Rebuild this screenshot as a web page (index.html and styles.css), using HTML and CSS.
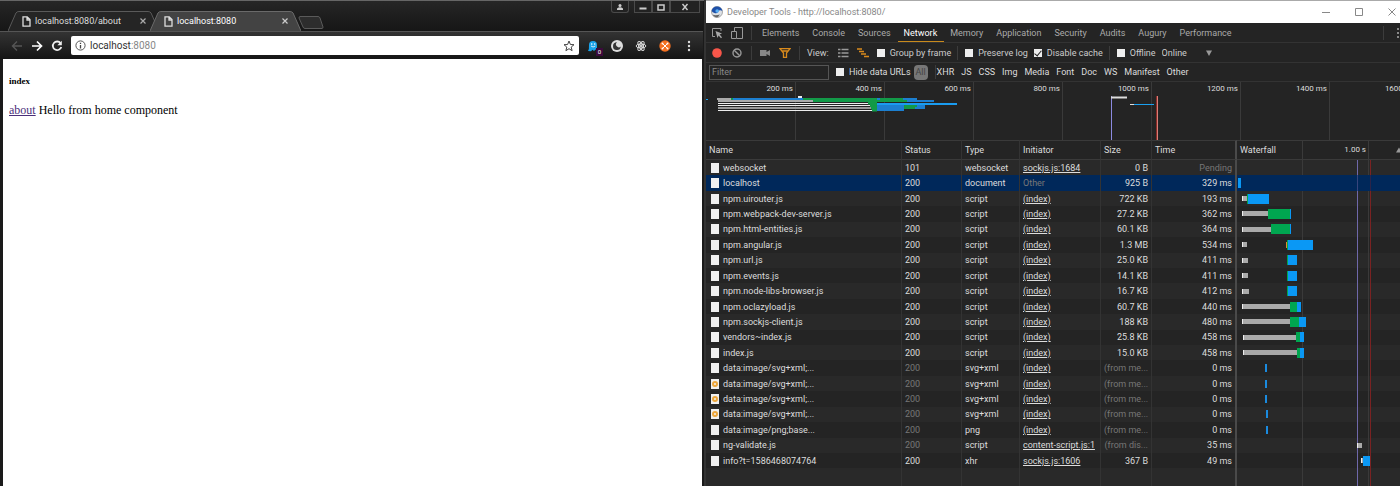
FILE: index.html
```html
<!DOCTYPE html>
<html lang="en">
<head>
  <meta charset="UTF-8">
  <title>localhost:8080</title>
  <link rel="stylesheet" href="styles.css">
</head>
<body>
<div class="browser">
  <div class="tabstrip">
    <div class="tab">
      <svg class="tab-shape" viewBox="0 0 152 20" preserveAspectRatio="none"><path d="M0 20L8 2Q9 .5 11 .5H141Q143 .5 144 2L152 20" fill="#252525" stroke="#5a5a5a"/></svg>
      <svg class="file" viewBox="0 0 9 11"><path d="M1 .8H5.2L8 3.6V10.2H1ZM5 1V4H8" fill="none" stroke="#ddd" stroke-width="1.3"/></svg>
      <span class="tab-title">localhost:8080/about</span>
      <button class="tab-close" aria-label="Close"><svg viewBox="0 0 6 6"><path d="M.5 .5L5.5 5.5M5.5 .5L.5 5.5" stroke="#aaa" stroke-width="1.2"/></svg></button>
    </div>
    <div class="tab active">
      <svg class="tab-shape" viewBox="0 0 152 20" preserveAspectRatio="none"><path d="M0 20L8 2Q9 .5 11 .5H141Q143 .5 144 2L152 20" fill="#434343" stroke="#6a6a6a"/></svg>
      <svg class="file" viewBox="0 0 9 11"><path d="M1 .8H5.2L8 3.6V10.2H1ZM5 1V4H8" fill="none" stroke="#ddd" stroke-width="1.3"/></svg>
      <span class="tab-title">localhost:8080</span>
      <button class="tab-close" aria-label="Close"><svg viewBox="0 0 6 6"><path d="M.5 .5L5.5 5.5M5.5 .5L.5 5.5" stroke="#ccc" stroke-width="1.2"/></svg></button>
    </div>
    <button class="new-tab" aria-label="New tab"><svg viewBox="0 0 26 13"><path d="M2 .5H20Q21.500 .5 22 2L25 11Q25 12.500 24 12.500H7Q5.500 12.500 5 11L1 2Q1 .5 2 .5Z" fill="#2d2d2d" stroke="#5a5a5a"/></svg></button>
    <div class="win-buttons">
      <button class="user" aria-label="User"><svg viewBox="0 0 8 8"><circle cx="4" cy="2.400" r="1.500" fill="#ccc"/><path d="M1 7V5.600Q2.500 4.300 4 4.300T7 5.600V7Z" fill="#ccc"/></svg></button>
      <button aria-label="Minimize"><svg viewBox="0 0 8 8"><path d="M.5 5.500H7.500" stroke="#ccc" stroke-width="2"/></svg></button>
      <button aria-label="Maximize"><svg viewBox="0 0 8 8"><path d="M1 2H7V7H1Z" fill="none" stroke="#ccc" stroke-width="1.500"/></svg></button>
      <button class="wide" aria-label="Close"><svg viewBox="0 0 8 8"><path d="M1.500 1L6.500 7M6.500 1L1.500 7" stroke="#ccc" stroke-width="1.400"/></svg></button>
    </div>
  </div>
  <div class="nav">
    <button aria-label="Back"><svg viewBox="0 0 12 12"><path d="M11 6H2M6 1.500L1.500 6L6 10.500" fill="none" stroke="#555" stroke-width="1.400"/></svg></button>
    <button aria-label="Forward"><svg viewBox="0 0 12 12"><path d="M1 6H10M6 1.500L10.500 6L6 10.500" fill="none" stroke="#fff" stroke-width="1.700"/></svg></button>
    <button aria-label="Reload"><svg viewBox="0 0 12 12"><path d="M9.600 3.200A4.300 4.300 0 1 0 10.300 7" fill="none" stroke="#eee" stroke-width="1.800"/><path d="M10.800 .8V5.300H6.300Z" fill="#eee"/></svg></button>
    <div class="omnibox">
      <svg class="info" viewBox="0 0 11 11"><circle cx="5.500" cy="5.500" r="4.600" fill="none" stroke="#555"/><path d="M5.500 2.700V4M5.500 5V8.500" stroke="#444" stroke-width="1.300"/></svg>
      <span class="url" role="textbox" aria-label="Address">localhost<span class="port">:8080</span></span>
      <svg class="star" viewBox="0 0 12 12"><path d="M6 1L7.400 4.500L11 4.700L8.200 7.100L9.100 10.700L6 8.700L2.900 10.700L3.800 7.100L1 4.700L4.600 4.500Z" fill="none" stroke="#444"/></svg>
    </div>
    <div class="extensions">
      <button class="ghost" aria-label="Ghostery"><svg viewBox="0 0 12 12"><path d="M2 5Q2 1 6 1T10 5V10.500L8.500 9.500L7 11L5.500 9.800L4 11.300L1 11Q2.300 9 2 5Z" fill="#1aa3ea"/><circle cx="4.700" cy="4" r=".8" fill="#fff"/><circle cx="7.700" cy="4" r=".8" fill="#fff"/><path d="M4 6Q6 8 8.300 6" fill="none" stroke="#fff" stroke-width=".8"/></svg><span class="badge">0</span></button>
      <button aria-label="Augury"><svg viewBox="0 0 12 12"><circle cx="6" cy="6" r="6" fill="#ddd"/><path d="M6 2.200A3.900 3.900 0 1 0 9.800 6.500A2.600 2.600 0 1 1 6 2.200Z" fill="#333"/></svg></button>
      <button aria-label="React"><svg viewBox="0 0 12 12"><g fill="none" stroke="#ddd"><ellipse cx="6" cy="6" rx="5" ry="2"/><ellipse cx="6" cy="6" rx="5" ry="2" transform="rotate(60 6 6)"/><ellipse cx="6" cy="6" rx="5" ry="2" transform="rotate(120 6 6)"/></g><circle cx="6" cy="6" r="1" fill="#fff"/></svg></button>
      <button aria-label="Extension"><svg viewBox="0 0 12 12"><circle cx="6" cy="6" r="5.700" fill="#f37021"/><path d="M3.500 3.500L8.500 8.500M8.500 3.500L3.500 8.500" stroke="#fff"/><g fill="#fff"><circle cx="3.500" cy="3.500" r="1"/><circle cx="8.500" cy="3.500" r="1"/><circle cx="3.500" cy="8.500" r="1"/><circle cx="8.500" cy="8.500" r="1"/></g></svg></button>
      <button aria-label="Menu"><svg viewBox="0 0 12 12"><g fill="#ddd"><circle cx="6" cy="2" r="1.200"/><circle cx="6" cy="6" r="1.200"/><circle cx="6" cy="10" r="1.200"/></g></svg></button>
    </div>
  </div>
  <div class="page">
    <h5>index</h5>
    <p><a href="#about">about</a> Hello from home component</p>
  </div>
</div>

<div class="devtools">
  <div class="titlebar">
    <svg class="logo" viewBox="0 0 12 12"><circle cx="6" cy="6" r="5.500" fill="#dde1e6" stroke="#777" stroke-width=".6"/><path d="M.6 5Q1.500 .5 6 .5T11.400 5Q10 4 8 4.500Q6.500 8 3.500 7Q1.500 6.500 .6 5Z" fill="#1e50a8"/><path d="M1.500 8.500Q4 10 9 8.500Q7.500 11.400 5 11.200Q2.500 10.800 1.500 8.500Z" fill="#666"/><circle cx="6.200" cy="5" r="1.800" fill="#5ab0f5"/></svg>
    <span class="title">Developer Tools - http://localhost:8080/</span>
    <button aria-label="Minimize"><svg viewBox="0 0 8 8"><path d="M0 4.500H8" stroke="#888"/></svg></button>
    <button aria-label="Maximize"><svg viewBox="0 0 8 8"><path d="M.5 .5H7.500V7.500H.5Z" fill="none" stroke="#888"/></svg></button>
    <button aria-label="Close"><svg viewBox="0 0 8 8"><path d="M.5 .5L7.500 7.500M7.500 .5L.5 7.500" stroke="#888"/></svg></button>
  </div>
  <div class="panels">
    <button class="tool" aria-label="Inspect"><svg viewBox="0 0 12 12"><path d="M4 9.500H1.500V1.500H10V4" fill="none" stroke="#999"/><path d="M4.500 4L11 6.500L8.600 7.600L11 10.300L10 11.200L7.600 8.600L6.500 11Z" fill="#aaa"/></svg></button>
    <button class="tool" aria-label="Device toolbar"><svg viewBox="0 0 12 12"><path d="M3.500 4V.5H11.500V11.500H6M.5 4.500H5.500V11.500H.5Z" fill="none" stroke="#999"/></svg></button>
    <span class="sep"></span>
    <nav>
      <a href="#elements">Elements</a>
      <a href="#console">Console</a>
      <a href="#sources">Sources</a>
      <a href="#network" class="current">Network</a>
      <a href="#memory">Memory</a>
      <a href="#application">Application</a>
      <a href="#security">Security</a>
      <a href="#audits">Audits</a>
      <a href="#augury">Augury</a>
      <a href="#performance">Performance</a>
    </nav>
    <span class="sep right"></span>
    <button class="more" aria-label="More"><svg viewBox="0 0 12 12"><g fill="#aaa"><circle cx="6" cy="2" r="1"/><circle cx="6" cy="6" r="1"/><circle cx="6" cy="10" r="1"/></g></svg></button>
  </div>
  <div class="actions">
    <button class="tool" aria-label="Record"><svg viewBox="0 0 12 12"><circle cx="6" cy="6" r="4.800" fill="#f8564a"/></svg></button>
    <button class="tool" aria-label="Clear"><svg viewBox="0 0 12 12"><circle cx="6" cy="6" r="4" fill="none" stroke="#999" stroke-width="1.400"/><path d="M3.200 3.200L8.800 8.800" stroke="#999" stroke-width="1.400"/></svg></button>
    <span class="sep"></span>
    <button class="tool" aria-label="Screenshots"><svg viewBox="0 0 12 12"><path d="M1 3H7.500V5L11 3V9L7.500 7V9H1Z" fill="#888"/></svg></button>
    <button class="tool" aria-label="Filter"><svg viewBox="0 0 12 12"><path d="M1 1.700H11L7.500 6V10.300H4.500V6ZM2.500 4H9.500" fill="none" stroke="#d98a1c" stroke-width="1.300"/></svg></button>
    <span class="sep"></span>
    <span class="view">View:</span>
    <button class="tool" aria-label="Large rows"><svg viewBox="0 0 12 12"><path d="M1 2.500H3.500M1 6H3.500M1 9.500H3.500M4.500 2.500H11.500M4.500 6H11.500M4.500 9.500H11.500" stroke="#999" stroke-width="1.600"/></svg></button>
    <button class="tool" aria-label="Waterfall"><svg viewBox="0 0 12 12"><path d="M0 2H5M2 4.500H7M4 7H9M7 9.500H12" stroke="#d98a1c" stroke-width="1.500"/></svg></button>
    <label><input type="checkbox"> Group by frame</label>
    <span class="sep"></span>
    <label><input type="checkbox"> Preserve log</label>
    <label><input type="checkbox" checked> Disable cache</label>
    <span class="sep"></span>
    <label><input type="checkbox"> Offline</label>
    <span class="throttle"><select aria-label="Throttling"><option>Online</option></select><svg viewBox="0 0 6 6"><path d="M0 .5H6L3 6Z" fill="#999"/></svg></span>
  </div>
  <div class="filters">
    <input class="filter" type="text" placeholder="Filter" aria-label="Filter">
    <label><input type="checkbox"> Hide data URLs</label>
    <div class="types">
      <button class="all">All</button>
      <span class="sep"></span>
      <button>XHR</button>
      <button>JS</button>
      <button>CSS</button>
      <button>Img</button>
      <button>Media</button>
      <button>Font</button>
      <button>Doc</button>
      <button>WS</button>
      <button>Manifest</button>
      <button>Other</button>
    </div>
  </div>
  <div class="overview">
    <span>200 ms</span><span>400 ms</span><span>600 ms</span><span>800 ms</span><span>1000 ms</span><span>1200 ms</span><span>1400 ms</span><span>1600 ms</span>
    <svg class="overview-bars" width="694" height="58" viewBox="0 0 694 58">
      <path d="M0 17.500H2" stroke="#1aa0f0"/>
      <path d="M92 15H96" stroke="#eee" stroke-width="2"/>
      <path d="M11 17H27M12 19H108" stroke="#aaa" stroke-width="2"/>
      <path d="M27 17H97" stroke="#1c7fd0" stroke-width="2"/>
      <path d="M25 17H27M97 17H197M107 19H201" stroke="#129a48" stroke-width="2"/>
      <path d="M171 17H174M197 17H211M201 19H228" stroke="#1c7fd0" stroke-width="2"/>
      <path d="M12 21.500H163M12 23.500H164M12 28.500H166" stroke="#eee"/>
      <path d="M12 26H166" stroke="#999" stroke-width="2"/>
      <path d="M162 21H171M164 23.500H171M165 26H171M166 28H171" stroke="#129a48" stroke-width="3"/>
      <path d="M171 24H219M171 26H219M171 28H198" stroke="#1c7fd0" stroke-width="2"/>
      <path d="M171 22H251" stroke="#1a9cf0" stroke-width="2"/>
      <path d="M198 24H211M198 26H209" stroke="#129a48" stroke-width="2"/>
      <path d="M405.500 14V58" stroke="#8c8ae0"/>
      <path d="M405 15.500H421" stroke="#ddd" stroke-width="2"/>
      <path d="M424 22.500H429" stroke="#ddd"/>
      <path d="M428 22.500H448" stroke="#1aa0f0"/>
      <path d="M450.500 14V58" stroke="#8a2a26"/>
      <path d="M451.500 14V58" stroke="#d8807a"/>
    </svg>
  </div>
  <div class="requests">
    <table>
      <thead>
        <tr>
          <th class="name">Name</th>
          <th class="status">Status</th>
          <th class="type">Type</th>
          <th class="initiator">Initiator</th>
          <th class="size">Size</th>
          <th class="time">Time</th>
          <th class="waterfall"><div class="wf-head"><span>Waterfall</span><span class="mark">1.00 s</span><svg viewBox="0 0 6 6"><path d="M0 5.500L3 .5L6 5.500Z" fill="#999"/></svg></div></th>
        </tr>
      </thead>
      <tbody id="rows"></tbody>
    </table>
  </div>
</div>
<script src="network.js"></script>
</body>
</html>
```

FILE: styles.css
```css
* {
  box-sizing: border-box;
}

body {
  margin: 0;
  min-height: 100vh;
  display: grid;
  grid-template-columns: 704fr 696fr;
  background: #111;
  font-family: Roboto, "Noto Sans", sans-serif;
  font-size: 9px;
  line-height: 12px;
}

button {
  padding: 0;
  border: 0;
  background: none;
  color: inherit;
  font: inherit;
  display: flex;
  align-items: center;
  justify-content: center;
}

svg {
  display: block;
  flex: none;
}

/* browser window */

.browser {
  display: flex;
  flex-direction: column;
  min-width: 0;
  padding-right: 1px;
  border-top: 1px solid #666;
  background: #1a1a1a;
}

.tabstrip {
  display: flex;
  align-items: flex-end;
  height: 30px;
  padding-left: 8px;
  background: linear-gradient(#262626, #161616);
}

.tab {
  position: relative;
  display: flex;
  align-items: center;
  width: 151px;
  height: 20px;
  padding: 0 13px 0 14px;
  color: #ddd;
}

.tab.active {
  margin-left: -9px;
  color: #fff;
}

.tab-shape {
  position: absolute;
  left: 0;
  top: 0;
  width: 100%;
  height: 100%;
}

.tab .file {
  position: relative;
  width: 9px;
  height: 11px;
}

.tab-title {
  position: relative;
  flex: 1;
  margin-left: 4px;
  white-space: nowrap;
}

.tab-close {
  position: relative;
}

.tab-close svg {
  width: 6px;
  height: 6px;
}

.new-tab {
  margin: 0 0 2px -3px;
}

.new-tab svg {
  width: 26px;
  height: 13px;
}

.win-buttons {
  display: flex;
  align-self: flex-start;
  margin-left: auto;
  margin-right: 3px;
}

.win-buttons button {
  width: 18px;
  height: 12px;
  border: 1px solid #4a4a4a;
  border-top: 0;
  background: #222;
}

.win-buttons .user {
  margin-right: 5px;
  border-radius: 0 0 3px 3px;
}

.win-buttons .wide {
  width: 30px;
}

.win-buttons svg {
  width: 8px;
  height: 8px;
}

.nav {
  display: flex;
  align-items: center;
  height: 28px;
  padding: 0 8px 0 11px;
  border-top: 1px solid #555;
  background: linear-gradient(#333, #151515);
}

.nav button {
  position: relative;
  width: 12px;
  height: 12px;
  margin-right: 8px;
}

.nav svg {
  width: 12px;
  height: 12px;
}

.omnibox {
  display: flex;
  align-items: center;
  flex: 1;
  height: 19px;
  padding: 0 4px;
  border-radius: 2px;
  background: #fff;
}

.omnibox .info {
  width: 11px;
  height: 11px;
}

.url {
  flex: 1;
  margin-left: 4px;
  color: #333;
  font-size: 10px;
}

.port {
  color: #888;
}

.extensions {
  display: flex;
  gap: 12px;
  margin-left: 8px;
}

.nav .extensions button {
  margin: 0;
}

.badge {
  position: absolute;
  right: -4px;
  bottom: -4px;
  width: 7px;
  height: 8px;
  background: #3c0a3c;
  color: #fff;
  font-size: 6px;
  line-height: 8px;
}

.page {
  flex: 1;
  margin: 0 1px 0 3px;
  padding: 1px 6px;
  background: #fff;
  color: #000;
  font-family: "Liberation Serif", serif;
}

.page h5 {
  margin: 15px 0 16px;
  font-size: 9px;
  line-height: 12px;
}

.page p {
  margin: 0;
  font-size: 12px;
  line-height: 14px;
}

.page a {
  color: #4a2f7a;
}

/* devtools window */

.devtools {
  display: flex;
  flex-direction: column;
  min-width: 0;
  overflow: hidden;
  border-left: 2px solid #333;
  background: #242424;
  color: #ccc;
}

.titlebar {
  display: flex;
  align-items: center;
  height: 23px;
  padding: 0 4px 0 5px;
  border-top: 1px solid #aaa;
  background: #fff;
  color: #888;
}

.titlebar .logo {
  width: 12px;
  height: 12px;
}

.title {
  flex: 1;
  margin-left: 4px;
}

.titlebar button {
  width: 8px;
  margin-left: 25px;
}

.titlebar button svg {
  width: 8px;
  height: 8px;
}

.panels,
.actions,
.filters {
  display: flex;
  align-items: center;
  height: 20px;
  padding-left: 5px;
  border-bottom: 1px solid #333;
  white-space: nowrap;
}

.filters {
  height: 19px;
  padding-left: 3px;
  color: #ddd;
}

.tool {
  width: 12px;
  height: 12px;
  margin-right: 8px;
}

.tool svg,
.more svg {
  width: 12px;
  height: 12px;
}

.sep {
  width: 1px;
  height: 14px;
  margin-right: 7px;
  background: #3c3c3c;
}

.panels .sep {
  margin-right: 4px;
}

.panels nav {
  display: flex;
  height: 100%;
  margin-right: auto;
}

.panels a {
  padding: 4px 7px 0 6px;
  border-bottom: 1px solid transparent;
  color: #aaa;
  text-decoration: none;
}

.panels .current {
  border-color: #c98a1c;
  color: #fff;
}

.panels .right {
  margin-right: 8px;
}

.more {
  width: 12px;
  margin-right: -4px;
}

.view {
  margin-right: 8px;
}

label {
  display: flex;
  align-items: center;
  gap: 5px;
  margin-right: 6px;
}

input[type="checkbox"] {
  appearance: none;
  width: 8px;
  height: 8px;
  margin: 0;
  background: #eee;
}

input[type="checkbox"]:checked::before {
  content: "";
  display: block;
  width: 3px;
  height: 6px;
  margin-left: 2px;
  border: solid #222;
  border-width: 0 1px 1px 0;
  transform: rotate(40deg);
}

.throttle {
  display: flex;
  align-items: center;
  width: 50px;
}

.throttle select {
  flex: 1;
  appearance: none;
  padding: 0;
  border: 0;
  background: none;
  color: inherit;
  font: inherit;
}

.throttle svg {
  width: 6px;
  height: 6px;
}

.filter {
  width: 120px;
  height: 15px;
  margin-right: 7px;
  padding: 0 2px;
  border: 1px solid #555;
  background: #242424;
  color: #ddd;
  font: inherit;
}

.filter::placeholder {
  color: #888;
}

.types {
  display: flex;
  align-items: center;
  gap: 7px;
  margin-left: -3px;
}

.types .all {
  width: 14px;
  height: 15px;
  border-radius: 4px;
  background: #777;
  color: #444;
}

.types .sep {
  margin-right: -6px;
}

/* timeline above the table */

.overview {
  position: relative;
  display: flex;
  height: 58px;
  overflow: hidden;
  color: #ddd;
  font-size: 8px;
}

.overview span {
  flex: 0 0 90px;
  padding: 1px 2px 0 0;
  border-right: 1px solid #3a3a3a;
  text-align: right;
}

.overview span + span {
  flex-basis: 89px;
}

.overview-bars {
  position: absolute;
  left: 0;
  top: 0;
}

/* request table */

.requests {
  flex: 1;
  display: grid;
}

table {
  width: 100%;
  height: 100%;
  table-layout: fixed;
  border-collapse: separate;
  border-spacing: 0;
}

th {
  height: 20px;
  padding: 0 2px 0 3px;
  border-top: 1px solid #3a3a3a;
  border-bottom: 1px solid #3a3a3a;
  font-weight: 400;
  text-align: left;
}

.name { width: 196px; }
.status { width: 60px; }
.type { width: 58px; }
.initiator { width: 81px; }
.size { width: 51px; }
.time { width: 85px; }

th,
td {
  border-right: 1px solid #333;
  color: #ddd;
}

td {
  height: 15px;
  padding: 0 3px;
  line-height: 14px;
  white-space: nowrap;
  overflow: hidden;
}

td.size,
td.time {
  text-align: right;
}

th.time,
td.time {
  border-right: 2px solid #4a4a4a;
}

tbody tr:nth-child(odd) {
  background: #292929;
}

tbody .selected {
  background: #00285a !important;
}

td a {
  color: inherit;
}

.dim {
  color: #777;
}

.cell {
  display: flex;
  align-items: center;
}

.icon {
  display: flex;
  align-items: center;
  justify-content: center;
  width: 8px;
  height: 10px;
  margin: 0 4px 0 2px;
  background: #f0f0f0;
}

.icon.image::before {
  content: "";
  width: 2px;
  height: 2px;
  border: 2px solid #eda63a;
  border-radius: 3px;
}

th.waterfall,
td.waterfall {
  border-right: 0;
}

th.waterfall {
  padding-right: 0;
  background:
    linear-gradient(#3a3a3a, #3a3a3a) 65px 0 / 1px 100% no-repeat,
    linear-gradient(#3a3a3a, #3a3a3a) 131px 0 / 1px 100% no-repeat;
}

td.waterfall {
  padding: 0;
  background:
    linear-gradient(#6f68aa, #6f68aa) 120px 0 / 1px 100% no-repeat,
    linear-gradient(#7a2222, #7a2222) 133px 0 / 1px 100% no-repeat,
    linear-gradient(#3a3a3a, #3a3a3a) 65px 0 / 1px 100% no-repeat,
    linear-gradient(#3a3a3a, #3a3a3a) 131px 0 / 1px 100% no-repeat;
}

.selected td.waterfall {
  background:
    linear-gradient(#38457c, #38457c) 120px 0 / 1px 100% no-repeat,
    linear-gradient(#2c2448, #2c2448) 133px 0 / 1px 100% no-repeat;
}

.wf-head {
  display: flex;
  align-items: center;
}

.wf-head .mark {
  margin-left: auto;
  margin-right: 30px;
  font-size: 8px;
}

.wf-head svg {
  width: 6px;
  height: 6px;
  margin-right: -2px;
}

.bars {
  display: flex;
  align-items: center;
  height: 10px;
}

.bars i {
  height: 10px;
}

.bars .wait {
  height: 5px;
  background: #aaa;
  border-left: 1px solid #eee;
}

.bars .queue {
  height: 6px;
  background: #e08a2e;
}

.bars .ttfb {
  background: #00a650;
}

.bars .load {
  background: #0a98f5;
}

.bars .mini {
  height: 8px;
  background: #1a8be0;
}

.filler td {
  height: 17px;
}
```

FILE: network.js
```js
// name, status, type, initiator, size, time, bars [kind, width], flags
var requests = [
  ['websocket', '101', 'websocket', 'sockjs.js:1684', '0 B', 'Pending', []],
  ['localhost', '200', 'document', 'Other', '925 B', '329 ms', [['gap', 1], ['load', 3]], 'selected'],
  ['npm.uirouter.js', '200', 'script', '(index)', '722 KB', '193 ms', [['gap', 5], ['wait', 5], ['ttfb', 1], ['load', 21]]],
  ['npm.webpack-dev-server.js', '200', 'script', '(index)', '27.2 KB', '362 ms', [['gap', 5], ['wait', 26], ['ttfb', 22], ['load', 1]]],
  ['npm.html-entities.js', '200', 'script', '(index)', '60.1 KB', '364 ms', [['gap', 5], ['wait', 29], ['ttfb', 19], ['load', 1]]],
  ['npm.angular.js', '200', 'script', '(index)', '1.3 MB', '534 ms', [['gap', 5], ['wait', 5], ['gap', 39], ['queue', 1], ['ttfb', 1], ['load', 25]]],
  ['npm.url.js', '200', 'script', '(index)', '25.0 KB', '411 ms', [['gap', 5], ['wait', 6], ['gap', 39], ['ttfb', 1], ['load', 9]]],
  ['npm.events.js', '200', 'script', '(index)', '14.1 KB', '411 ms', [['gap', 5], ['wait', 6], ['gap', 39], ['ttfb', 1], ['load', 9]]],
  ['npm.node-libs-browser.js', '200', 'script', '(index)', '16.7 KB', '412 ms', [['gap', 5], ['wait', 7], ['gap', 38], ['ttfb', 1], ['load', 9]]],
  ['npm.oclazyload.js', '200', 'script', '(index)', '60.7 KB', '440 ms', [['gap', 5], ['wait', 48], ['ttfb', 7], ['load', 4]]],
  ['npm.sockjs-client.js', '200', 'script', '(index)', '188 KB', '480 ms', [['gap', 5], ['wait', 48], ['ttfb', 9], ['load', 7]]],
  ['vendors~index.js', '200', 'script', '(index)', '25.8 KB', '458 ms', [['gap', 6], ['wait', 53], ['ttfb', 4], ['load', 4]]],
  ['index.js', '200', 'script', '(index)', '15.0 KB', '458 ms', [['gap', 6], ['wait', 54], ['ttfb', 3], ['load', 4]]],
  ['data:image/svg+xml;...', '200', 'svg+xml', '(index)', '(from me...', '0 ms', [['gap', 28], ['mini', 2]]],
  ['data:image/svg+xml;...', '200', 'svg+xml', '(index)', '(from me...', '0 ms', [['gap', 28], ['mini', 2]], 'image'],
  ['data:image/svg+xml;...', '200', 'svg+xml', '(index)', '(from me...', '0 ms', [['gap', 28], ['mini', 2]], 'image'],
  ['data:image/svg+xml;...', '200', 'svg+xml', '(index)', '(from me...', '0 ms', [['gap', 29], ['mini', 2]], 'image'],
  ['data:image/png;base...', '200', 'png', '(index)', '(from me...', '0 ms', [['gap', 29], ['mini', 2]]],
  ['ng-validate.js', '200', 'script', 'content-script.js:1', '(from dis...', '35 ms', [['gap', 120], ['wait', 5]]],
  ['info?t=1586468074764', '200', 'xhr', 'sockjs.js:1606', '367 B', '49 ms', [['gap', 124], ['wait', 2], ['load', 7]]]
];

function dim(text, isDim) {
  return isDim ? '<span class="dim">' + text + '</span>' : text;
}

var html = '';
requests.forEach(function (r) {
  var cached = r[4].indexOf('(from') === 0;
  var bars = r[6].map(function (b) {
    return '<i class="' + b[0] + '" style="width:' + b[1] + 'px"></i>';
  }).join('');
  var initiator = r[3] === 'Other' ? dim(r[3], true) : '<a href="#source">' + r[3] + '</a>';

  html += '<tr class="' + (r[7] === 'selected' ? 'selected' : '') + '">' +
    '<td><div class="cell"><span class="icon ' + (r[7] === 'image' ? 'image' : '') + '"></span>' + r[0] + '</div></td>' +
    '<td>' + dim(r[1], cached) + '</td>' +
    '<td>' + r[2] + '</td>' +
    '<td>' + initiator + '</td>' +
    '<td class="size">' + dim(r[4], cached) + '</td>' +
    '<td class="time">' + dim(r[5], r[5] === 'Pending') + '</td>' +
    '<td class="waterfall"><div class="bars">' + bars + '</div></td></tr>';
});
html += '<tr class="filler"><td></td><td></td><td></td><td></td><td></td><td class="time"></td><td class="waterfall"></td></tr>';

document.getElementById('rows').innerHTML = html;
```
